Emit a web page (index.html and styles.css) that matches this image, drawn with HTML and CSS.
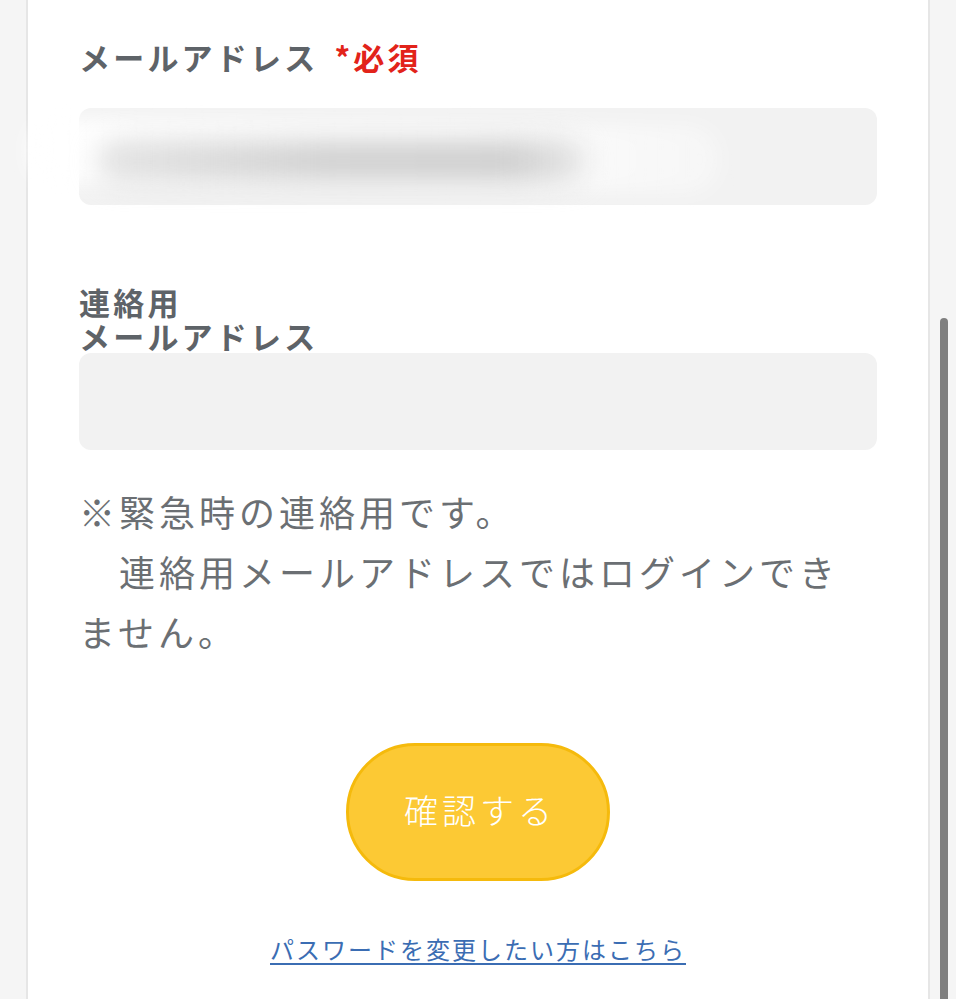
FILE: index.html
```html
<!DOCTYPE html>
<html lang="ja">
<head>
<meta charset="utf-8">
<title>メールアドレス変更</title>
<link rel="stylesheet" href="styles.css">
</head>
<body>
<div class="page">
  <div class="gutter gutter-left"></div>
  <main class="card">
    <div class="field">
      <label class="label">メールアドレス<span class="req">*必須</span></label>
      <div class="input-wrap">
        <div class="input"></div>
        <div class="redact redact-white"></div>
        <div class="redact redact-gray"></div>
      </div>
    </div>
    <div class="field field-second">
      <label class="label">連絡用<br>メールアドレス</label>
      <div class="input"></div>
    </div>
    <p class="note">※緊急時の連絡用です。<br>　連絡用メールアドレスではログインできません。</p>
    <div class="actions">
      <button class="btn">確認する</button>
    </div>
    <div class="link-row">
      <a class="link" href="#">パスワードを変更したい方はこちら</a>
    </div>
  </main>
  <div class="gutter gutter-right">
    <div class="thumb"></div>
  </div>
</div>
</body>
</html>
```
FILE: styles.css
```css
html, body {
  margin: 0;
  padding: 0;
  height: 100%;
  overflow: hidden;
}
body {
  background: #f5f5f5;
  font-family: "Noto Sans CJK JP", "Noto Sans", sans-serif;
}
.page {
  display: flex;
  height: 999px;
}
.gutter {
  background: #f5f5f5;
  flex: 0 0 auto;
}
.gutter-left {
  width: 26px;
}
.gutter-right {
  width: 26px;
  padding-top: 318px;
  padding-left: 10px;
  box-sizing: border-box;
  display: flex;
  flex-direction: column;
}
.thumb {
  width: 8px;
  flex: 1;
  background: #7f7f7f;
  border-radius: 4px 4px 0 0;
}
.card {
  flex: 1;
  background: #ffffff;
  border-left: 2px solid #e6e6e6;
  border-right: 2px solid #e6e6e6;
  padding: 40px 51px 0 51px;
  box-sizing: border-box;
  min-width: 0;
}
.field {
  display: flex;
  flex-direction: column;
}
.field-second {
  margin-top: 80px;
}
.label {
  display: block;
  font-size: 31px;
  line-height: 34px;
  font-weight: bold;
  color: #5e6368;
  letter-spacing: 3.2px;
  margin-bottom: 34px;
}
.field-second .label {
  margin-bottom: 0;
}
.req {
  color: #e2231a;
  margin-left: 16px;
}
.input-wrap {
  position: relative;
}
.input {
  height: 97px;
  background: #f2f2f2;
  border-radius: 12px;
}
.redact {
  position: absolute;
  pointer-events: none;
}
.redact-white {
  left: -50px;
  top: 14px;
  width: 690px;
  height: 66px;
  background: linear-gradient(90deg, rgba(255,255,255,0.95) 0%, rgba(255,255,255,0.85) 60%, rgba(255,255,255,0.35) 100%);
  border-radius: 30px;
  filter: blur(9px);
  transform: rotate(0.8deg);
}
.redact-gray {
  left: 18px;
  top: 32px;
  width: 490px;
  height: 42px;
  background: linear-gradient(90deg, rgba(210,210,210,0.6) 0%, #d2d2d2 45%, #cfcfcf 85%, rgba(215,215,215,0.5) 100%);
  border-radius: 22px;
  filter: blur(13px);
}
.note {
  margin: 31px 0 0 0;
  font-size: 36px;
  line-height: 60px;
  letter-spacing: 4px;
  color: #6b6f73;
  font-weight: normal;
}
.actions {
  display: flex;
  justify-content: center;
  margin-top: 82px;
}
.btn {
  width: 264px;
  height: 138px;
  border-radius: 69px;
  background: #fcc934;
  border: 3px solid #f5ba0c;
  color: #ffffff;
  font-family: "Noto Sans CJK JP", "Noto Sans", sans-serif;
  font-size: 34px;
  font-weight: 300;
  letter-spacing: 4px;
  padding: 0 0 6px 4px;
  cursor: pointer;
}
.link-row {
  display: flex;
  justify-content: center;
  margin-top: 53px;
}
.link {
  font-size: 24px;
  line-height: 30px;
  letter-spacing: 2px;
  color: #3b6db3;
  text-decoration: underline;
  text-underline-offset: 4px;
}
```
